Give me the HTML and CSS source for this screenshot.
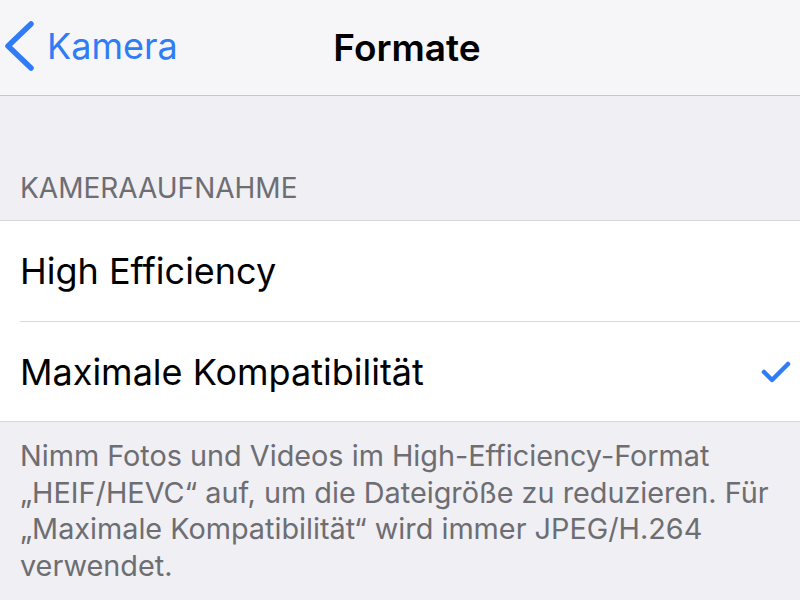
FILE: index.html
```html
<!DOCTYPE html>
<html lang="de">
<head>
    <meta charset="UTF-8">
    <meta name="viewport" content="width=device-width, initial-scale=1.0">
    <title>Formate</title>
    <link rel="stylesheet" href="styles.css">
</head>
<body>
    <div class="nav-bar">
        <a href="#" class="back-button">
            <svg class="chevron" width="38" height="50" viewBox="0 0 38 50">
                <path d="M31 3 L8 25 L31 47" fill="none" stroke="#2f7cf6" stroke-width="5.5" stroke-linecap="round" stroke-linejoin="round"/>
            </svg>
            <span>Kamera</span>
        </a>
        <h1 class="nav-title">Formate</h1>
    </div>

    <div class="section-header">KAMERAAUFNAHME</div>

    <ul class="list-group">
        <li class="list-row">
            <span>High Efficiency</span>
        </li>
        <li class="list-row">
            <span>Maximale Kompatibilität</span>
            <svg class="check" width="32" height="24" viewBox="0 0 32 24">
                <path d="M4 12 L12 20 L28 4" fill="none" stroke="#2f7cf6" stroke-width="4.5" stroke-linecap="round" stroke-linejoin="round"/>
            </svg>
        </li>
    </ul>

    <p class="section-footer">Nimm Fotos und Videos im High-Efficiency-Format „HEIF/HEVC“ auf, um die Dateigröße zu reduzieren. Für „Maximale Kompatibilität“ wird immer JPEG/H.264 verwendet.</p>
</body>
</html>
```

FILE: styles.css
```css
body, html {
    margin: 0;
    padding: 0;
    height: 100%;
    font-family: 'Inter', 'Noto Sans', sans-serif;
    background-color: #efeff4;
    overflow: hidden;
}

.nav-bar {
    position: relative;
    height: 95px;
    background-color: #f6f6f8;
    border-bottom: 1px solid #c8c7cc;
    display: flex;
    align-items: center;
    justify-content: center;
}

.back-button {
    position: absolute;
    left: 0;
    top: 21px;
    display: flex;
    align-items: center;
    gap: 9px;
    text-decoration: none;
    color: #2f7cf6;
    font-size: 36px;
}

.chevron {
    display: block;
}

.nav-title {
    margin: 0;
    font-size: 37px;
    font-weight: 600;
    color: #000;
    padding-left: 14px;
}

.section-header {
    height: 124px;
    box-sizing: border-box;
    padding: 0 20px 15px;
    display: flex;
    align-items: flex-end;
    font-size: 28px;
    color: #6d6d72;
}

.list-group {
    list-style: none;
    margin: 0;
    padding: 0;
    background-color: #fff;
    border-top: 1px solid #d8d8dc;
    border-bottom: 1px solid #d8d8dc;
}

.list-row {
    height: 100px;
    box-sizing: border-box;
    margin-left: 20px;
    padding-right: 8px;
    display: flex;
    align-items: center;
    justify-content: space-between;
    font-size: 36px;
    color: #000;
}

.list-row + .list-row {
    border-top: 1px solid #d8d8dc;
}

.section-footer {
    margin: 0;
    padding: 16px 20px 0;
    font-size: 28.8px;
    line-height: 36.5px;
    color: #6d6d72;
}
```
